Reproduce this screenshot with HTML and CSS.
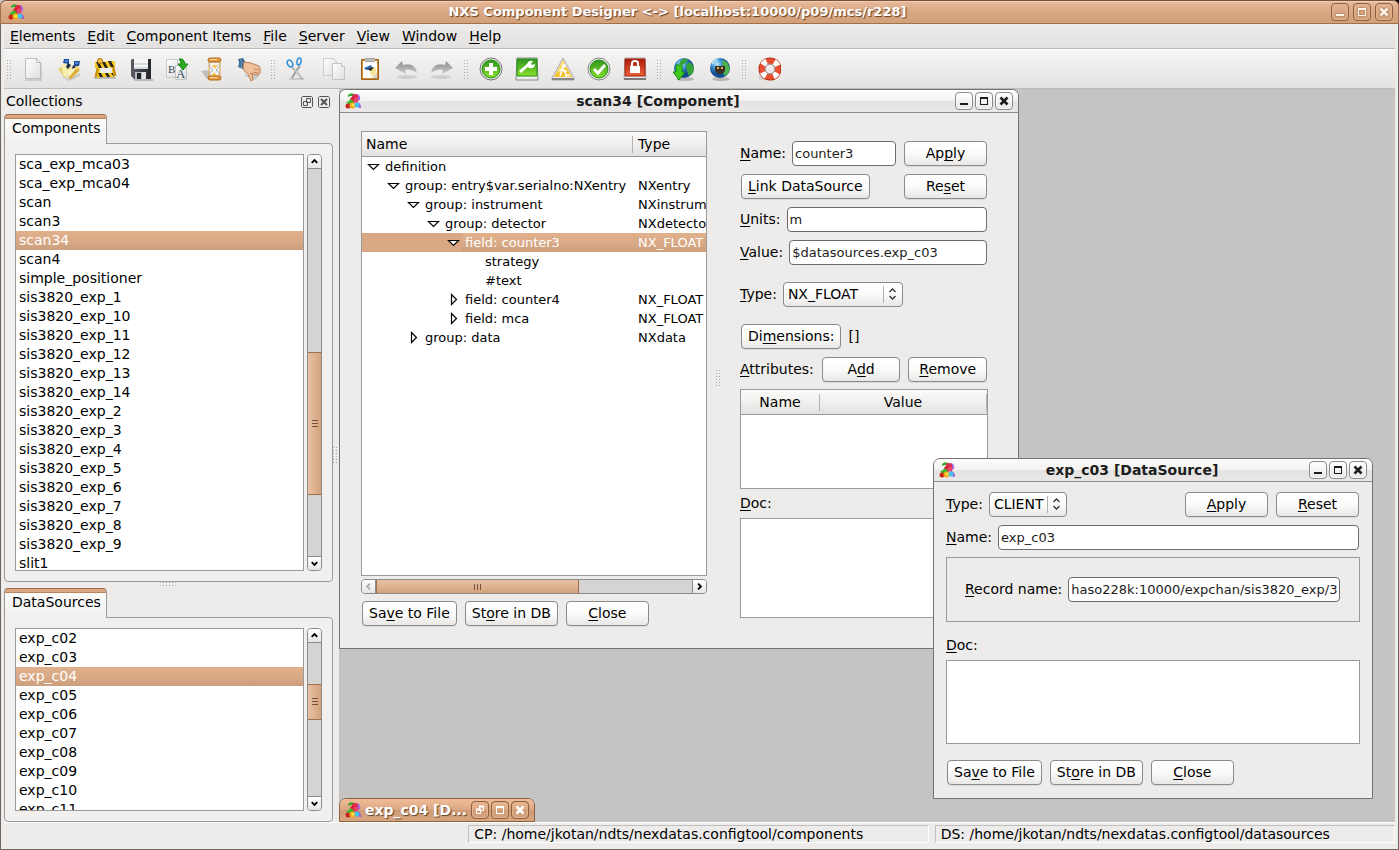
FILE: index.html
```html
<!DOCTYPE html>
<html lang="en">

<head>
    <meta charset="UTF-8">
    <title>NXS Component Designer</title>
    <link rel="stylesheet" href="styles.css">
</head>

<body>
    <svg class="defs" aria-hidden="true">
        <defs>
            <linearGradient id="paper" x2="1" y2="1"><stop stop-color="#fff"/><stop offset="1" stop-color="#dedede"/></linearGradient>
            <linearGradient id="green" x2="0" y2="1"><stop stop-color="#2d9420"/><stop offset="1" stop-color="#8be02a"/></linearGradient>
            <linearGradient id="grey" x2="0" y2="1"><stop stop-color="#8e8e8c"/><stop offset="1" stop-color="#c8c8c6"/></linearGradient>
            <linearGradient id="red" x2="0" y2="1"><stop stop-color="#a81c08"/><stop offset="1" stop-color="#f0603a"/></linearGradient>
            <linearGradient id="metal" x2="1" y2="0"><stop stop-color="#5a5e64"/><stop offset="1" stop-color="#22262c"/></linearGradient>
            <radialGradient id="sea" cx=".35" cy=".3"><stop stop-color="#c4ecfc"/><stop offset=".5" stop-color="#3b92d4"/><stop offset="1" stop-color="#124a94"/></radialGradient>
        </defs>
        <symbol id="logo" viewBox="0 0 16 16">
            <path d="M3 2q3-3 6-1L8 4Q6 2 3 4z" fill="#35a82c"/>
            <path d="M12 1q4 1 3 6l-3 1z" fill="#a86ae8"/>
            <circle cx="10" cy="4" r="3" fill="#e0284c"/><circle cx="8" cy="7" r="3" fill="#d81c34"/>
            <circle cx="11" cy="7" r="2.500" fill="#e8436a"/>
            <path d="M1 10l5-4 3 3-3 3z" fill="#42b52e"/>
            <path d="M11 9q5 0 5 6l-4-1z" fill="#a044e0"/>
            <circle cx="3" cy="13" r="2.500" fill="#c8241c"/><circle cx="7.500" cy="12.500" r="3" fill="#f6a81c"/>
            <circle cx="8" cy="12" r="1.500" fill="#fae84c"/><circle cx="12" cy="12" r="2.500" fill="#43c4e8"/>
        </symbol>
        <symbol id="min" viewBox="0 0 18 18"><path d="M5 12h8" stroke="currentColor" stroke-width="2"/></symbol>
        <symbol id="max" viewBox="0 0 18 18"><path d="M5.500 5v8M12.500 5v8M5 12.500h8" fill="none" stroke="currentColor"/><path d="M5 6h8" stroke="currentColor" stroke-width="2"/></symbol>
        <symbol id="close" viewBox="0 0 18 18"><path d="M5.500 5.500l7 7M12.500 5.500l-7 7" stroke="currentColor" stroke-width="2.500"/></symbol>
        <symbol id="restore" viewBox="0 0 18 18"><path d="M8.500 5.500h4v4h-4zM5.500 8.500h4v4h-4z" fill="none" stroke="currentColor"/><path d="M8 5.500h5M5 8.500h5" stroke="currentColor" stroke-width="2"/></symbol>
        <symbol id="up" viewBox="0 0 14 14"><path d="M4 8.500l3-3 3 3" fill="none" stroke="currentColor" stroke-width="2"/></symbol>
        <symbol id="down" viewBox="0 0 14 14"><path d="M4 5.500l3 3 3-3" fill="none" stroke="currentColor" stroke-width="2"/></symbol>
        <symbol id="left" viewBox="0 0 14 14"><path d="M8.500 4l-3 3 3 3" fill="none" stroke="currentColor" stroke-width="2"/></symbol>
        <symbol id="right" viewBox="0 0 14 14"><path d="M5.500 4l3 3-3 3" fill="none" stroke="currentColor" stroke-width="2"/></symbol>
        <symbol id="updown" viewBox="0 0 9 12"><path d="M1.500 4l3-3 3 3M1.500 8l3 3 3-3" fill="none" stroke="#333" stroke-width="1.300"/></symbol>
        <symbol id="open" viewBox="0 0 13 13"><path d="M1.500 4.500h10l-5 5z" fill="#fff" stroke="#000" stroke-width="1.200"/></symbol>
        <symbol id="shut" viewBox="0 0 13 13"><path d="M4.500 1.500v10l5-5z" fill="#fff" stroke="#000" stroke-width="1.200"/></symbol>
    </svg>

    <div class="app">
        <header class="titlebar">
            <svg class="logo"><use href="#logo"/></svg>
            <h1>NXS Component Designer &lt;-&gt; [localhost:10000/p09/mcs/r228]</h1>
            <div class="winbuttons">
                <button aria-label="Minimize"><svg><use href="#min"/></svg></button>
                <button aria-label="Maximize"><svg><use href="#max"/></svg></button>
                <button aria-label="Close"><svg><use href="#close"/></svg></button>
            </div>
        </header>

        <nav class="menubar">
            <button><u>E</u>lements</button>
            <button><u>E</u>dit</button>
            <button><u>C</u>omponent Items</button>
            <button><u>F</u>ile</button>
            <button><u>S</u>erver</button>
            <button><u>V</u>iew</button>
            <button><u>W</u>indow</button>
            <button><u>H</u>elp</button>
        </nav>

        <div class="toolbar">
            <span class="grip"></span>
            <button aria-label="New component"><svg viewBox="0 0 24 24"><path d="M4 2h12l5 5v17H4z" fill="#000" opacity=".12"/><path d="M4.500 1.500h11l4 4v16h-15z" fill="url(#paper)" stroke="#bcbcba"/><path d="M15.500 1.500v4h4z" fill="#fff" stroke="#bcbcba"/></svg></button>
            <button aria-label="Load component"><svg viewBox="0 0 24 24"><path d="M3 19l9 3 11-6v3l-11 5z" opacity=".15"/><path d="M1 12l11-6 5 9-9 6z" fill="#e6ce72"/><path d="M4 7l9 1 2 9-8 3z" fill="#f8eeb0"/><path d="M10 12l11-4 2 5-10 9z" fill="#edd47c"/><path d="M9 14l8-4 1 3-5 8z" fill="#faf0bc"/><path d="M11 21l8-9 4 1-9 9z" fill="#d8b038"/><path d="M7 2h5v5l-6-1zM17 4h6l-1 5h-5z" fill="#1c4c9c"/><path d="M8 3h3v2H8zM18 5h3v2h-3z" fill="#5084d4"/><path d="M11 6l3 2-3 4-2-2zM16 8l3 2-4 2z" fill="#1a2a4a"/></svg></button>
            <button aria-label="Edit component"><svg viewBox="0 0 24 24"><path d="M1 20h22v2H1z" opacity=".2"/><path d="M6 7L3 20M19 6l3 13" stroke="#c88c08" stroke-width="3"/><path d="M7 8l-2 13M18 8l2 12" stroke="#f6c81c" stroke-width="2"/><path d="M2 5l20-1v6L2 11zM4 16h17v4H4z" fill="#f8c81c"/><path d="M3 5h3l3 6H6zM9 5h3l3 6h-3zM15 4h3l3 6h-3zM5 16h3l2 4H7zM12 16h3l2 4h-3zM18 16h2l1 4z" fill="#25231d"/><path d="M7 11h12v5H7z" fill="#ededeb"/><circle cx="7" cy="4" r="2.500" fill="#f8ca40" stroke="#a86a08"/></svg></button>
            <button aria-label="Save component"><svg viewBox="0 0 24 24"><path d="M4 22h20v2H6z" opacity=".2"/><path d="M2 3l1-1h19v20H5l-3-3z" fill="url(#metal)"/><path d="M5 2h14v10H5z" fill="#f7f7f7"/><path d="M5 6h14v2H5zM5 10h14v2H5z" fill="#d6d9dc"/><path d="M6 15h11v7H6z" fill="#b7bbc0"/><path d="M8 16h4v6H8z" fill="#22262c"/><path d="M13 15h4v7h-4z" fill="#e2e4e6"/></svg></button>
            <button aria-label="Save as"><svg viewBox="0 0 24 24"><path d="M1.500 2.500h11v18h-11z" fill="url(#paper)" stroke="#c8c8c8"/><text x="3" y="16" font-family="Liberation Serif, serif" font-size="11" fill="#34495e">B</text><path d="M10.500 8.500h11v14h-11z" fill="url(#paper)" stroke="#c4c4c4"/><text x="11" y="21" font-family="Liberation Serif, serif" font-size="13" fill="#34495e">A</text><path d="M14 2q5-1 6 5h3l-5 6-5-6h3q0-3-2-5z" fill="#2caa20" stroke="#178812"/></svg></button>
            <button aria-label="Apply"><svg viewBox="0 0 24 24"><path d="M0 14l8-1v9l-3-1z" opacity=".18"/><path d="M8 5h11l-1 5-3 3 3 3 1 5H8l1-5 3-3-3-3z" fill="#f3f6f8" stroke="#a9b3b8"/><path d="M10 8h7l-3 4zM9 20l4-5 5 5z" fill="#f4c85c"/><path d="M8 5v15M19 5v15" stroke="#dda45a" stroke-width="1"/><rect x="7" y="1" width="13" height="4" rx="2" fill="#e99a3c" stroke="#b0691c"/><rect x="7" y="19" width="13" height="4" rx="2" fill="#e99a3c" stroke="#b0691c"/><path d="M9 2.500h7M9 20.500h7" stroke="#fbd89c"/></svg></button>
            <button aria-label="Merge"><svg viewBox="0 0 24 24"><path d="M6 18l18-1-6 6z" opacity=".14"/><path d="M1 2l5-1 3 5-3 6-5-2q2-4 0-8z" fill="#3c6a94"/><path d="M3 2l2 3-1 6" fill="none" stroke="#75a0c4"/><path d="M7 5l7 1 8 3q2 2 1 7l-3 2-5-1 1 6-2 1-3-7q-4-2-5-6z" fill="#f0c09c" stroke="#bc8058"/><path d="M17 12l5 1M16 15l5 1M13 16l3 1" stroke="#bc8058"/></svg></button>
            <span class="grip"></span>
            <button aria-label="Cut"><svg viewBox="0 0 24 24"><path d="M3 21h15v2H3z" opacity=".12"/><path d="M6 10l4 4 6 8M14 9l-4 5-4 7" fill="none" stroke="#9c9ea0" stroke-width="2"/><path d="M7 10l8 11" stroke="#e6e6e6"/><ellipse cx="4" cy="6.500" rx="2.500" ry="3.500" transform="rotate(-28 4 6.500)" fill="none" stroke="#2a8cd6" stroke-width="1.500"/><ellipse cx="13" cy="4.500" rx="2" ry="3.500" transform="rotate(12 13 4.500)" fill="none" stroke="#2a8cd6" stroke-width="1.500"/></svg></button>
            <button aria-label="Copy"><svg viewBox="0 0 24 24"><path d="M1.500 1.500h10l3 3v14h-13z" fill="url(#paper)" stroke="#cbcbc9"/><path d="M10.500 6.500h9l3 3v13h-12z" fill="url(#paper)" stroke="#c3c3c1"/><path d="M19.500 6.500v3h3" fill="#fff" stroke="#c3c3c1"/></svg></button>
            <button aria-label="Paste"><svg viewBox="0 0 24 24"><path d="M3.500 2.500h17v20h-17z" fill="#cf8a36" stroke="#9a6220"/><path d="M5 4h14v17H5z" fill="#fff"/><path d="M14 21l5-5v5z" fill="#d2d2d2"/><path d="M10 11l7-1 2 6-5 4z" fill="#f4e49c"/><path d="M6 11l7-3 2 4-7 1z" fill="#2f67ad"/><path d="M9 12l7-2-3 4z" fill="#3a2c20"/><path d="M7 1h10v4H7z" fill="#a4a4a4"/><path d="M7 3h10" stroke="#d4d4d4"/></svg></button>
            <button aria-label="Undo"><svg viewBox="0 0 24 24"><ellipse cx="13" cy="20" rx="10" ry="2" opacity=".1"/><path d="M1 11l7-7 1 4q12-3 14 8-6-5-12-3l1 4z" fill="url(#grey)"/></svg></button>
            <button aria-label="Redo"><svg viewBox="0 0 24 24"><ellipse cx="11" cy="20" rx="10" ry="2" opacity=".1"/><path d="M23 11l-7-7-1 4Q3 5 1 16q6-5 12-3l-1 4z" fill="url(#grey)"/></svg></button>
            <span class="grip"></span>
            <button aria-label="Add"><svg viewBox="0 0 24 24"><circle cx="12" cy="12" r="11" fill="#e8e8e8" stroke="#777"/><circle cx="12" cy="12" r="9" fill="url(#green)" stroke="#249018"/><path d="M12 6v12M6 12h12" stroke="#fff" stroke-width="4"/></svg></button>
            <button aria-label="Configure"><svg viewBox="0 0 24 24"><path d="M2 1h20l1 22H1z" fill="#ececec" stroke="#888"/><path d="M2 2h20v17H2z" fill="url(#green)" stroke="#249018"/><path d="M5 15l9-8" stroke="#fff" stroke-width="3"/><path d="M12 9q0-6 6-5l-2 3 1 1 3-1q0 5-6 4z" fill="#fff"/></svg></button>
            <button aria-label="Warning"><svg viewBox="0 0 24 24"><path d="M12 1l11 20v2H1v-2z" fill="#ececec" stroke="#aaa"/><path d="M12 3l9 17H3z" fill="#f3c12c"/><path d="M12 3l3 6-9 9z" fill="#fae07c"/><circle cx="13" cy="9" r="2" fill="#fff"/><path d="M12 11l-3 8M12 12l4 7M8 13l8 1M14 19l5-1" stroke="#fff" stroke-width="1.500"/><path d="M1 22h22" stroke="#888" stroke-width="2"/></svg></button>
            <button aria-label="Check"><svg viewBox="0 0 24 24"><circle cx="12" cy="12" r="11" fill="#ececec" stroke="#888"/><circle cx="12" cy="12" r="9" fill="url(#green)" stroke="#249018"/><path d="M7 12l4 4 7-8" fill="none" stroke="#fff" stroke-width="3"/></svg></button>
            <button aria-label="Lock"><svg viewBox="0 0 24 24"><path d="M2 1h20l1 21H1z" fill="#ececec" stroke="#aaa"/><path d="M2 2h20v17H2z" fill="url(#red)" stroke="#9c1d0a"/><path d="M7 9h10v7H7z" fill="#fff"/><path d="M9 9V6q0-2 3-2t3 2v3" fill="none" stroke="#fff" stroke-width="2"/><path d="M1 22h22" stroke="#777" stroke-width="2"/></svg></button>
            <span class="grip"></span>
            <button aria-label="Get from server"><svg viewBox="0 0 24 24"><ellipse cx="13" cy="22" rx="9" ry="2" opacity=".2"/><circle cx="12" cy="11" r="10" fill="url(#sea)"/><path d="M9 3q4-2 7-1l-2 4-4 2-3-1zM14 8l4-3 4 5-1 6-4 3-2-5z" fill="#36a336"/><path d="M4 8h6v7h3l-6 8-6-8h3z" fill="#41c71d" stroke="#178c12"/></svg></button>
            <button aria-label="Connect"><svg viewBox="0 0 24 24"><ellipse cx="13" cy="22" rx="9" ry="2" opacity=".2"/><circle cx="12" cy="11" r="10" fill="url(#sea)"/><path d="M14 3l5 2 3 6-2 6-4 2-1-7z" fill="#4cb24c"/><path d="M4 5q3-3 7-3l-3 3-4 3z" fill="#a8dcf0"/><path d="M7 9h10v5l-3 3h-4l-3-3z" fill="#3b3023"/><path d="M10 10v2M14 10v2" stroke="#d9ae4a" stroke-width="2"/></svg></button>
            <span class="grip"></span>
            <button aria-label="Help"><svg viewBox="0 0 24 24"><path d="M2 16h7v7H2z" opacity=".1"/><circle cx="13" cy="12" r="8" fill="none" stroke="#b8341c" stroke-width="7"/><circle cx="13" cy="12" r="8" fill="none" stroke="#ea5030" stroke-width="5"/><circle cx="13" cy="12" r="8" fill="none" stroke="#fff" stroke-width="6" stroke-dasharray="5 7.566" stroke-dashoffset="-4"/><circle cx="13" cy="12" r="5" fill="none" stroke="#a5a5a5"/></svg></button>
        </div>

        <main class="main">
            <aside class="dock">
                <div class="dock_title">
                    <h2>Collections</h2>
                    <button aria-label="Float"><svg viewBox="0 0 12 12"><path d="M1.500.5h9l1 1v9l-1 1h-9l-1-1v-9zM5.500 2.500h4v4h-4zM2.500 5.500h4v4h-4z" fill="none" stroke="#555"/></svg></button>
                    <button aria-label="Close"><svg viewBox="0 0 12 12"><path d="M1.500.5h9l1 1v9l-1 1h-9l-1-1v-9z" fill="none" stroke="#555"/><path d="M3 3l6 6M9 3L3 9" stroke="#555" stroke-width="2"/></svg></button>
                </div>
                <section class="tabbox components">
                    <button class="tab">Components</button>
                    <div class="pane">
                        <ul class="list">
                            <li>sca_exp_mca03</li>
                            <li>sca_exp_mca04</li>
                            <li>scan</li>
                            <li>scan3</li>
                            <li class="selected">scan34</li>
                            <li>scan4</li>
                            <li>simple_positioner</li>
                            <li>sis3820_exp_1</li>
                            <li>sis3820_exp_10</li>
                            <li>sis3820_exp_11</li>
                            <li>sis3820_exp_12</li>
                            <li>sis3820_exp_13</li>
                            <li>sis3820_exp_14</li>
                            <li>sis3820_exp_2</li>
                            <li>sis3820_exp_3</li>
                            <li>sis3820_exp_4</li>
                            <li>sis3820_exp_5</li>
                            <li>sis3820_exp_6</li>
                            <li>sis3820_exp_7</li>
                            <li>sis3820_exp_8</li>
                            <li>sis3820_exp_9</li>
                            <li>slit1</li>
                        </ul>
                        <div class="scroll">
                            <button aria-label="Scroll up"><svg><use href="#up"/></svg></button>
                            <span class="before"></span><span class="thumb"><i></i></span><span class="after"></span>
                            <button aria-label="Scroll down"><svg><use href="#down"/></svg></button>
                        </div>
                    </div>
                </section>
                <span class="grip grip_h"></span>
                <section class="tabbox sources">
                    <button class="tab">DataSources</button>
                    <div class="pane">
                        <ul class="list">
                            <li>exp_c02</li>
                            <li>exp_c03</li>
                            <li class="selected">exp_c04</li>
                            <li>exp_c05</li>
                            <li>exp_c06</li>
                            <li>exp_c07</li>
                            <li>exp_c08</li>
                            <li>exp_c09</li>
                            <li>exp_c10</li>
                            <li>exp_c11</li>
                        </ul>
                        <div class="scroll">
                            <button aria-label="Scroll up"><svg><use href="#up"/></svg></button>
                            <span class="before"></span><span class="thumb"><i></i></span><span class="after"></span>
                            <button aria-label="Scroll down"><svg><use href="#down"/></svg></button>
                        </div>
                    </div>
                </section>
            </aside>
            <span class="grip splitter"></span>

            <div class="desktop">
                <section class="window component">
                    <header class="wintitle">
                        <svg class="logo"><use href="#logo"/></svg>
                        <h2>scan34 [Component]</h2>
                        <div class="winbuttons">
                            <button aria-label="Minimize"><svg><use href="#min"/></svg></button>
                            <button aria-label="Maximize"><svg><use href="#max"/></svg></button>
                            <button aria-label="Close"><svg><use href="#close"/></svg></button>
                        </div>
                    </header>
                    <div class="winbody">
                        <div class="left">
                            <div class="treebox">
                                <table class="tree">
                                    <thead>
                                        <tr><th class="col_name"><span>Name</span></th><th>Type</th></tr>
                                    </thead>
                                    <tbody>
                                        <tr><td class="l0"><div><svg><use href="#open"/></svg><span>definition</span></div></td><td></td></tr>
                                        <tr><td class="l1"><div><svg><use href="#open"/></svg><span>group: entry$var.serialno:NXentry</span></div></td><td>NXentry</td></tr>
                                        <tr><td class="l2"><div><svg><use href="#open"/></svg><span>group: instrument</span></div></td><td>NXinstrument</td></tr>
                                        <tr><td class="l3"><div><svg><use href="#open"/></svg><span>group: detector</span></div></td><td>NXdetector</td></tr>
                                        <tr class="current"><td class="l4"><div><svg><use href="#open"/></svg><span class="selected">field: counter3</span></div></td><td class="selected">NX_FLOAT</td></tr>
                                        <tr><td class="l5"><div><svg></svg><span>strategy</span></div></td><td></td></tr>
                                        <tr><td class="l5"><div><svg></svg><span>#text</span></div></td><td></td></tr>
                                        <tr><td class="l4"><div><svg><use href="#shut"/></svg><span>field: counter4</span></div></td><td>NX_FLOAT</td></tr>
                                        <tr><td class="l4"><div><svg><use href="#shut"/></svg><span>field: mca</span></div></td><td>NX_FLOAT</td></tr>
                                        <tr><td class="l2"><div><svg><use href="#shut"/></svg><span>group: data</span></div></td><td>NXdata</td></tr>
                                    </tbody>
                                </table>
                            </div>
                            <div class="scroll scroll_h">
                                <button aria-label="Scroll left" disabled><svg><use href="#left"/></svg></button>
                                <span class="thumb"><i></i></span><span class="after"></span>
                                <button aria-label="Scroll right"><svg><use href="#right"/></svg></button>
                            </div>
                            <div class="buttons">
                                <button class="btn">Sa<u>v</u>e to File</button>
                                <button class="btn">St<u>o</u>re in DB</button>
                                <button class="btn wide"><u>C</u>lose</button>
                            </div>
                        </div>
                        <div class="divider"><span class="grip"></span></div>
                        <form class="right">
                            <div class="row">
                                <label for="name"><u>N</u>ame:</label>
                                <input id="name" type="text" value="counter3">
                                <button type="button" class="btn wide">Ap<u>p</u>ly</button>
                            </div>
                            <div class="row between">
                                <button type="button" class="btn"><u>L</u>ink DataSource</button>
                                <button type="button" class="btn wide">Re<u>s</u>et</button>
                            </div>
                            <div class="row">
                                <label for="units"><u>U</u>nits:</label>
                                <input id="units" type="text" value="m">
                            </div>
                            <div class="row">
                                <label for="value"><u>V</u>alue:</label>
                                <input id="value" type="text" value="$datasources.exp_c03">
                            </div>
                            <div class="row spaced">
                                <label for="type"><u>T</u>ype:</label>
                                <span class="combo combo_type">
                                    <select id="type"><option>NX_FLOAT</option></select>
                                    <svg><use href="#updown"/></svg>
                                </span>
                            </div>
                            <div class="row spaced dims">
                                <button type="button" class="btn">Di<u>m</u>ensions:</button>
                                <span>[]</span>
                            </div>
                            <div class="row attrs">
                                <span><u>A</u>ttributes:</span>
                                <button type="button" class="btn">A<u>d</u>d</button>
                                <button type="button" class="btn"><u>R</u>emove</button>
                            </div>
                            <div class="attrbox">
                                <table>
                                    <thead>
                                        <tr><th class="col_attr"><span>Name</span></th><th><span>Value</span></th></tr>
                                    </thead>
                                </table>
                            </div>
                            <label class="doc_label" for="doc"><u>D</u>oc:</label>
                            <textarea id="doc"></textarea>
                        </form>
                    </div>
                </section>

                <section class="window source">
                    <header class="wintitle">
                        <svg class="logo"><use href="#logo"/></svg>
                        <h2>exp_c03 [DataSource]</h2>
                        <div class="winbuttons">
                            <button aria-label="Minimize"><svg><use href="#min"/></svg></button>
                            <button aria-label="Maximize"><svg><use href="#max"/></svg></button>
                            <button aria-label="Close"><svg><use href="#close"/></svg></button>
                        </div>
                    </header>
                    <form class="winbody">
                        <div class="row">
                            <label for="ds_type"><u>T</u>ype:</label>
                            <span class="combo combo_client">
                                <select id="ds_type"><option>CLIENT</option></select>
                                <svg><use href="#updown"/></svg>
                            </span>
                            <div class="buttons push">
                                <button type="button" class="btn wide"><u>A</u>pply</button>
                                <button type="button" class="btn wide"><u>R</u>eset</button>
                            </div>
                        </div>
                        <div class="row">
                            <label for="ds_name"><u>N</u>ame:</label>
                            <input id="ds_name" type="text" value="exp_c03">
                        </div>
                        <div class="record">
                            <label for="ds_record"><u>R</u>ecord name:</label>
                            <input id="ds_record" type="text" value="haso228k:10000/expchan/sis3820_exp/3">
                        </div>
                        <label class="doc_label" for="ds_doc"><u>D</u>oc:</label>
                        <textarea id="ds_doc"></textarea>
                        <div class="buttons">
                            <button type="button" class="btn">Sa<u>v</u>e to File</button>
                            <button type="button" class="btn">St<u>o</u>re in DB</button>
                            <button type="button" class="btn wide"><u>C</u>lose</button>
                        </div>
                    </form>
                </section>

                <section class="window iconified">
                    <header class="wintitle">
                        <svg class="logo"><use href="#logo"/></svg>
                        <h2>exp_c04 [D...</h2>
                        <div class="winbuttons">
                            <button aria-label="Restore"><svg><use href="#restore"/></svg></button>
                            <button aria-label="Maximize"><svg><use href="#max"/></svg></button>
                            <button aria-label="Close"><svg><use href="#close"/></svg></button>
                        </div>
                    </header>
                </section>
            </div>
        </main>

        <footer class="statusbar">
            <span></span>
            <span class="path">CP: /home/jkotan/ndts/nexdatas.configtool/components</span>
            <span class="path">DS: /home/jkotan/ndts/nexdatas.configtool/datasources</span>
        </footer>
    </div>
</body>

</html>
```
FILE: styles.css
```css
* {
    margin: 0;
    padding: 0;
    box-sizing: border-box;
}

body {
    height: 100vh;
    overflow: hidden;
    background: linear-gradient(to right, #c8c8c8 50%, #000 50%);
    font: 14px/19px "DejaVu Sans", sans-serif;
    color: #000;
}

button, input, select, textarea {
    font: inherit;
    color: inherit;
}

button {
    border: 0;
    background: none;
    white-space: nowrap;
}

svg {
    display: block;
    flex: none;
}

u {
    text-underline-offset: 2px;
    text-decoration-thickness: 1px;
    text-decoration-skip-ink: none;
}

.defs {
    position: absolute;
    width: 0;
    height: 0;
}

.app {
    height: 100vh;
    display: flex;
    flex-direction: column;
    background: #edecea;
    border: 1px solid #6b6664;
    border-top: 0;
    border-radius: 6px 6px 0 0;
    padding: 0 3px;
}

/* title bars */
.titlebar, .wintitle {
    display: flex;
    align-items: center;
    height: 24px;
    flex: none;
    padding: 0 5px 0 5px;
}

.titlebar {
    margin: 0 -4px;
    padding-left: 7px;
    background: linear-gradient(#e8bb9d, #d9a783 50%, #d2a079);
    border: 1px solid #a0704c;
    border-top-color: #7a5238;
    border-radius: 6px 6px 0 0;
    box-shadow: inset 0 1px #f2cdb4;
}

.titlebar h1, .wintitle h2 {
    flex: 1;
    text-align: center;
    font-size: 14px;
    line-height: 20px;
    font-weight: bold;
    white-space: nowrap;
}

.titlebar h1 {
    font-size: 13px;
}

.titlebar h1, .iconified h2 {
    color: #fff;
    text-shadow: 1px 1px 1px #5e4028;
}

.logo {
    width: 16px;
    height: 16px;
}

.winbuttons {
    display: flex;
    gap: 2px;
}

.winbuttons button {
    width: 18px;
    height: 18px;
    border: 1px solid #8d8b89;
    border-radius: 4px;
    box-shadow: inset 0 0 0 1px #fafaf9;
    background: linear-gradient(#fff, #e8e7e5);
}

.winbuttons svg {
    width: 18px;
    height: 18px;
    margin: -1px;
}

.titlebar .winbuttons {
    gap: 4px;
    color: #fff2e8;
}

.titlebar .winbuttons button, .iconified .winbuttons button {
    border-color: #8d6040;
    box-shadow: inset 0 0 0 1px #e0b290;
    background: none;
}

.titlebar .winbuttons svg {
    filter: drop-shadow(0 0 1px #8d5c3c);
}

/* menu and toolbar */
.menubar {
    height: 25px;
    flex: none;
    display: flex;
    background: linear-gradient(#edecea, #e3e2e0);
    border-bottom: 1px solid #bdbbb9;
}

.menubar button {
    padding: 0 6px;
}

.toolbar {
    height: 40px;
    flex: none;
    display: flex;
    align-items: center;
    background: linear-gradient(#f5f5f3, #edecea 50%, #e4e3e1);
    border-top: 1px solid #fff;
    border-bottom: 1px solid #bdbbb9;
}

.toolbar button {
    width: 36px;
    height: 36px;
    display: grid;
    place-items: center;
}

.toolbar button svg {
    width: 24px;
    height: 24px;
}

.toolbar .grip {
    width: 13px;
    height: 19px;
    border: solid transparent;
    border-width: 0 4px;
}

.toolbar .grip:first-child {
    width: 11px;
    border-width: 0 3px;
}

.grip {
    flex: none;
    background: conic-gradient(from 270deg at 1px 1px, #aaa8a6 90deg, transparent 0) 0 0 / 3px 3px content-box;
}

/* dock on the left */
.main {
    flex: 1;
    min-height: 0;
    display: flex;
}

.dock {
    width: 329px;
    flex: none;
    display: flex;
    flex-direction: column;
}

.dock_title {
    height: 25px;
    flex: none;
    display: flex;
    align-items: center;
    gap: 5px;
    padding: 0 3px 0 2px;
}

.dock_title h2 {
    flex: 1;
    font-size: 14px;
    font-weight: normal;
}

.dock_title svg {
    width: 12px;
    height: 12px;
}

.tabbox {
    min-height: 0;
    display: flex;
    flex-direction: column;
}

.components {
    flex: 2 1 0;
}

.sources {
    flex: 1 1 0;
}

.tab {
    align-self: flex-start;
    flex: none;
    height: 30px;
    margin-bottom: -1px;
    padding: 0 5px 2px 7px;
    position: relative;
    border: 1px solid #9c9a98;
    border-top-color: #a0704c;
    border-bottom: 0;
    border-radius: 4px 4px 0 0;
    background: linear-gradient(#dba783 3px, #b98560 3px, #b98560 4px, #fcfcfb 4px, #f1f0ee);
}

.pane {
    flex: 1;
    min-height: 0;
    display: flex;
    gap: 3px;
    padding: 10px;
    border: 1px solid #9c9a98;
    border-radius: 0 4px 4px 4px;
    background: #f1f0ee;
}

.list {
    flex: 1;
    overflow: hidden;
    list-style: none;
    background: #fff;
    border: 1px solid #9c9a98;
}

.list li {
    height: 19px;
    padding-left: 3px;
}

.selected {
    color: #fff;
    background: linear-gradient(#e1b08b, #d9aa86 50%, #cc9f7c);
}

.grip_h {
    width: 18px;
    height: 6px;
    align-self: center;
}

.splitter {
    width: 6px;
    height: 18px;
    align-self: center;
}

/* scroll bars */
.scroll {
    width: 15px;
    flex: none;
    display: flex;
    flex-direction: column;
    background: #d5d4d2;
    border: 1px solid #8d8b89;
    border-radius: 4px;
    overflow: hidden;
}

.scroll button {
    width: 13px;
    height: 14px;
    flex: none;
    background: linear-gradient(#fff, #e6e5e3);
    border-bottom: 1px solid #8d8b89;
}

.scroll button:last-child {
    border-bottom: 0;
    border-top: 1px solid #8d8b89;
}

.scroll button svg {
    width: 13px;
    height: 13px;
}

.scroll button:disabled {
    color: #aaa;
}

.thumb {
    display: grid;
    place-items: center;
    border: solid #a0704c;
    border-width: 1px 0;
    background: linear-gradient(to right, #e8c1a5, #d3a27d);
}

.thumb i {
    width: 6px;
    height: 7px;
    background: repeating-linear-gradient(#75533b 0 1px, transparent 1px 3px);
}

.components .before { flex: 184; }
.components .thumb { flex: 142; }
.components .after { flex: 61; }
.sources .before { flex: 42; }
.sources .thumb { flex: 34; }
.sources .after { flex: 78; }

.scroll_h {
    width: auto;
    height: 15px;
    margin: 3px 0 7px;
    flex-direction: row;
}

.scroll_h button {
    width: 14px;
    height: 13px;
    border-bottom: 0;
    border-right: 1px solid #8d8b89;
}

.scroll_h button:last-child {
    border-top: 0;
    border-right: 0;
    border-left: 1px solid #8d8b89;
}

.scroll_h .thumb {
    flex: 203;
    border-width: 0 1px;
    background: linear-gradient(#e8c1a5, #d3a27d);
}

.scroll_h .thumb i {
    width: 7px;
    height: 6px;
    background: repeating-linear-gradient(to right, #75533b 0 1px, transparent 1px 3px);
}

.scroll_h .after { flex: 114; }

/* windows on the desktop */
.desktop {
    flex: 1;
    position: relative;
    overflow: hidden;
    background: #c6c4c2;
}

.window {
    position: absolute;
    display: flex;
    flex-direction: column;
    background: #edecea;
    border: 1px solid #757371;
    border-radius: 7px 7px 0 0;
}

.component {
    left: 0;
    top: 0;
    width: 680px;
    height: 560px;
}

.source {
    left: 594px;
    top: 369px;
    width: 440px;
    height: 341px;
}

.iconified {
    left: 0;
    bottom: 0;
    width: 196px;
    border-color: #8d6040;
}

.wintitle {
    height: 23px;
    border-radius: 6px 6px 0 0;
    border-bottom: 1px solid #8d8b89;
    background: linear-gradient(#fcfcfb, #f3f2f0 50%, #e4e3e1 50%, #e9e8e6);
    color: #1c1c1c;
}

.iconified .wintitle {
    height: 22px;
    border-bottom: 0;
    background: linear-gradient(#f2bd98, #d9a783 50%, #cf9b76 50%, #d6a681);
}

.iconified .winbuttons {
    color: #fff;
}

.winbody {
    flex: 1;
    min-height: 0;
    display: flex;
}

.component .winbody {
    padding: 18px 30px 22px 21px;
}

.left {
    flex: 1;
    min-width: 0;
    display: flex;
    flex-direction: column;
}

.treebox {
    flex: 1;
    min-height: 0;
    overflow: hidden;
    background: #fff;
    border: 1px solid #9c9a98;
}

table {
    width: 100%;
    table-layout: fixed;
    border-spacing: 0;
}

th {
    height: 25px;
    padding: 4px 0 3px;
    font-weight: normal;
    line-height: 17px;
    background: linear-gradient(#fafaf9, #f1f0ee 50%, #e2e1df);
    border-bottom: 1px solid #9c9a98;
}

th span {
    display: block;
    border-right: 1px solid #b5b3b1;
}

.tree th {
    padding-left: 4px;
    text-align: left;
}

.tree .col_name {
    width: 271px;
}

.tree td {
    height: 19px;
    font-size: 13px;
    white-space: nowrap;
}

.tree td + td, .tree th + th {
    padding-left: 5px;
}

.tree div {
    display: flex;
    align-items: center;
}

.tree svg {
    width: 13px;
    height: 13px;
    margin: 0 2px 0 5px;
}

.tree div span {
    flex: 1;
    padding-left: 3px;
}

.tree .current {
    background: #d7a883;
}

.tree .l1 { padding-left: 20px; }
.tree .l2 { padding-left: 40px; }
.tree .l3 { padding-left: 60px; }
.tree .l4 { padding-left: 80px; }
.tree .l5 { padding-left: 100px; }

.btn {
    height: 25px;
    padding: 0 6px;
    border: 1px solid #8d8b89;
    border-radius: 4px;
    background: linear-gradient(#fff, #fbfbfa 50%, #e8e7e5);
    box-shadow: 0 1px #dcdad8;
}

.wide {
    width: 83px;
}

.buttons {
    display: flex;
    gap: 8px;
    padding-left: 1px;
}

.divider {
    width: 33px;
    flex: none;
    display: flex;
    align-items: center;
    padding-left: 9px;
}

.divider .grip {
    width: 5px;
    height: 18px;
}

.right {
    width: 248px;
    flex: none;
    display: flex;
    flex-direction: column;
    padding-top: 10px;
}

.row {
    flex: none;
    display: flex;
    align-items: center;
    gap: 6px;
    padding-right: 1px;
    margin-bottom: 8px;
}

.row label, .record label {
    white-space: nowrap;
}

.row .btn {
    flex: none;
}

.row input + .btn {
    margin-left: 2px;
}

.between {
    justify-content: space-between;
    padding-left: 1px;
}

.spaced {
    margin-top: 9px;
}

.dims {
    padding-left: 1px;
    gap: 7px;
}

.attrs {
    gap: 8px;
    margin-bottom: 7px;
}

.row.attrs .btn {
    flex: 1;
}

input {
    flex: 1;
    min-width: 0;
    height: 25px;
    padding: 0 2px;
    background: #fff;
    border: 1px solid #6e6c6a;
    border-radius: 4px;
    font-size: 13px;
    color: #1c1c1c;
}

.combo {
    display: grid;
    align-items: center;
}

.combo select, .combo svg {
    grid-area: 1 / 1;
}

.combo select {
    height: 25px;
    padding: 0 4px;
    appearance: none;
    border: 1px solid #8d8b89;
    border-radius: 4px;
    background: linear-gradient(#fff, #fbfbfa 50%, #e8e7e5);
}

.combo svg {
    width: 20px;
    height: 17px;
    padding: 2px 2px 3px 0;
    border-left: 1px solid #b5b3b1;
    justify-self: end;
    pointer-events: none;
}

.combo_type {
    width: 120px;
}

.combo_client {
    width: 78px;
}

.attrbox {
    height: 100px;
    flex: none;
    background: #fff;
    border: 1px solid #9c9a98;
}

.col_attr {
    width: 79px;
}

.doc_label {
    margin: 5px 0;
}

textarea {
    flex: none;
    display: block;
    height: 100px;
    padding: 3px;
    resize: none;
    background: #fff;
    border: 1px solid #9c9a98;
}

.source .winbody {
    flex-direction: column;
    padding: 10px 12px 13px;
}

.push {
    margin-left: auto;
}

.record {
    height: 65px;
    flex: none;
    display: flex;
    align-items: center;
    gap: 6px;
    margin-top: -1px;
    padding: 0 19px 0 18px;
    border: 1px solid #9c9a98;
}

.source .doc_label {
    margin: 14px 0 5px;
}

.source textarea {
    flex: 1;
    min-height: 0;
    margin-bottom: 16px;
}

/* status bar */
.statusbar {
    height: 27px;
    flex: none;
    display: flex;
    gap: 6px;
    padding: 2px 0 6px;
    border-top: 1px solid #fff;
}

.statusbar span {
    flex: 1 1 0;
    padding-left: 5px;
    white-space: nowrap;
}

.statusbar .path {
    line-height: 16px;
    border: 1px solid #c2c0be;
    border-right-color: #fff;
    border-bottom-color: #fff;
}
```
